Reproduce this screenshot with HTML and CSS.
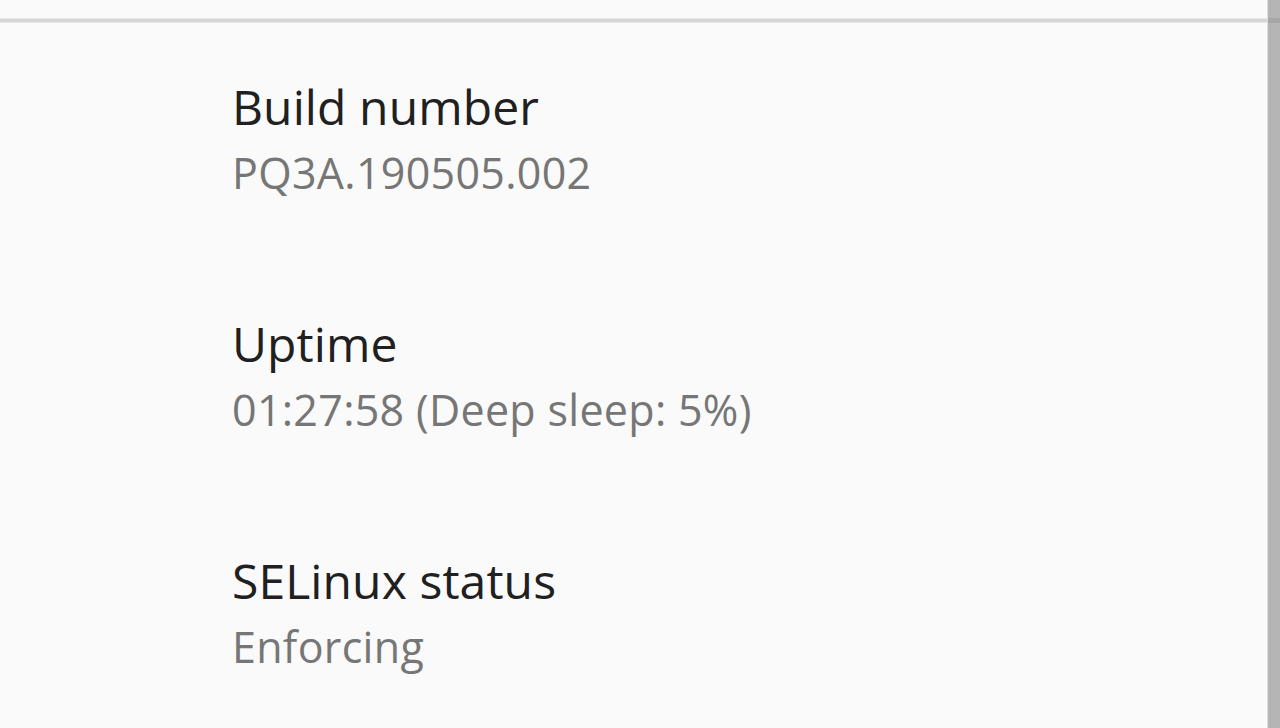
FILE: index.html
```html
<!DOCTYPE html>
<html>
<head>
<meta charset="utf-8">
<link rel="stylesheet" href="styles.css">
</head>
<body>
<div class="screen">
  <main class="content">
    <div class="topbar"></div>
    <div class="divider"></div>
    <ul class="prefs">
      <li class="pref">
        <div class="pref-title">Build number</div>
        <div class="pref-summary">PQ3A.190505.002</div>
      </li>
      <li class="pref">
        <div class="pref-title">Uptime</div>
        <div class="pref-summary">01:27:58 (Deep sleep: 5%)</div>
      </li>
      <li class="pref">
        <div class="pref-title">SELinux status</div>
        <div class="pref-summary">Enforcing</div>
      </li>
    </ul>
  </main>
  <div class="scrollbar"></div>
</div>
</body>
</html>
```
FILE: styles.css
```css
html, body {
  margin: 0;
  padding: 0;
  background: #fafafa;
}
body {
  font-family: "Open Sans", Roboto, sans-serif;
  width: 1280px;
  height: 728px;
  overflow: hidden;
}
.screen {
  display: flex;
  width: 1280px;
  height: 728px;
}
.content {
  flex: 1;
  display: flex;
  flex-direction: column;
}
.topbar {
  height: 18px;
  flex: none;
}
.divider {
  flex: none;
  height: 3px;
  background: #d6d6d6;
  border-top: 1px solid #e9e9e9;
  border-bottom: 1px solid #e9e9e9;
}
.prefs {
  list-style: none;
  margin: 0;
  padding: 0 0 0 232px;
  display: flex;
  flex-direction: column;
}
.pref {
  flex: none;
  padding-top: 56px;
  height: 181px;
}
.pref-title {
  font-size: 48px;
  line-height: 56px;
  letter-spacing: 0.1px;
  color: #202020;
}
.pref-summary {
  font-size: 43px;
  line-height: 56px;
  letter-spacing: 0.3px;
  color: #767676;
  margin-top: 10px;
}
.scrollbar {
  width: 12px;
  background: linear-gradient(to bottom, #b5b5b5 0, #b5b5b5 18px, #a6a6a6 18px, #a6a6a6 23px, #b5b5b5 23px);
  border-left: 1px solid #e0e0e0;
}
```
